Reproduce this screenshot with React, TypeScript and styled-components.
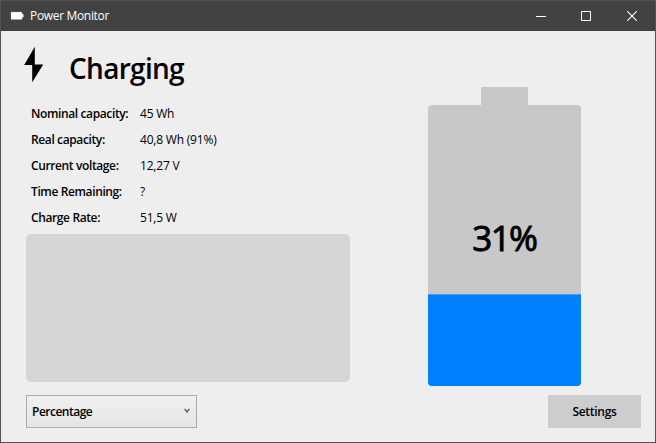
import React from "react";
import styled, { createGlobalStyle } from "styled-components";

const GlobalStyle = createGlobalStyle`
  * { box-sizing: border-box; }
  body { margin: 0; font-family: "Segoe UI", "Open Sans", "Noto Sans", sans-serif; font-size: 12px; color: #000; overflow: hidden; }
`;

const Window = styled.div`
  width: 656px;
  height: 443px;
  display: flex;
  flex-direction: column;
  background: #eeeeee;
  border: 1px solid #535353;
`;

const TitleBar = styled.header`
  height: 30px;
  flex: none;
  display: flex;
  align-items: center;
  background: #424242;
  color: #fff;
  padding-left: 9px;
`;

const AppTitle = styled.span`
  flex: 1;
  margin-left: 6px;
  line-height: 28px;
  letter-spacing: -0.33px;
`;

const CaptionButton = styled.button`
  width: 46px;
  height: 28px;
  padding: 0;
  border: 0;
  background: none;
  display: grid;
  place-items: center;
`;

const Body = styled.main`
  flex: 1;
  display: flex;
  justify-content: space-between;
  padding: 0 14px 14px 25px;
`;

const Details = styled.section`
  width: 324px;
  display: flex;
  flex-direction: column;
`;

const Status = styled.div`
  height: 70px;
  display: flex;
  align-items: flex-start;
`;

const StatusText = styled.h1`
  margin: 18px 0 0 25px;
  font-size: 28px;
  line-height: 38px;
  font-weight: 600;
  letter-spacing: -0.7px;
`;

const Stats = styled.dl`
  margin: 0 0 0 5px;
  display: grid;
  grid-template-columns: 109px 1fr;
  grid-auto-rows: 26px;
  line-height: 26px;
  white-space: nowrap;
`;

const Label = styled.dt`
  font-weight: 600;
  letter-spacing: -0.38px;
`;

const Value = styled.dd`
  margin: 0;
  letter-spacing: -0.2px;
`;

const Graph = styled.div`
  margin-top: 3px;
  height: 148px;
  border-radius: 5px;
  background: #d5d5d5;
`;

const Select = styled.button`
  margin-top: 13px;
  width: 171px;
  height: 33px;
  display: flex;
  align-items: center;
  justify-content: space-between;
  padding: 0 6px 0 5px;
  border: 1px solid #acacac;
  background: linear-gradient(#f0f0f0, #e5e5e5);
  font: 600 12px "Segoe UI", "Open Sans", "Noto Sans", sans-serif;
  letter-spacing: -0.5px;
  color: #000;
`;

const Chevron = styled.svg`
  margin-bottom: 2px;
`;

const Gauge = styled.section`
  width: 213.4px;
  display: flex;
  flex-direction: column;
  padding-top: 56.4px;
`;

const Battery = styled.div`
  width: 153.5px;
  height: 298.2px;
  display: flex;
  flex-direction: column;
  align-items: center;
`;

const Terminal = styled.div`
  width: 47px;
  height: 18px;
  flex: none;
  margin-left: 1px;
  border-radius: 1px 1px 0 0;
  background: #c8c8c8;
`;

const Cell = styled.div`
  width: 100%;
  flex: 1;
  display: flex;
  flex-direction: column;
  border-radius: 4px;
  overflow: hidden;
  background: #c8c8c8;
`;

const Percent = styled.div`
  flex: 1;
  padding-top: 107px;
  font-size: 35px;
  line-height: 52px;
  font-weight: 400;
  -webkit-text-stroke: 0.9px #000;
  text-align: center;
  letter-spacing: -1.6px;
`;

const Charge = styled.div`
  height: 91.5px;
  background: #0080ff;
  border-top: 1px solid #409be8;
`;

const SettingsButton = styled.button`
  align-self: flex-end;
  margin-top: 9.4px;
  width: 93px;
  height: 33px;
  border: 0;
  background: #cdcdcd;
  font: 600 12px "Segoe UI", "Open Sans", "Noto Sans", sans-serif;
  letter-spacing: -0.3px;
  color: #000;
`;

const stats = [
  { label: "Nominal capacity:", value: "45 Wh" },
  { label: "Real capacity:", value: "40,8 Wh (91%)" },
  { label: "Current voltage:", value: "12,27 V" },
  { label: "Time Remaining:", value: "?" },
  { label: "Charge Rate:", value: "51,5 W" },
];

export default function App() {
  return (
    <Window>
      <GlobalStyle />
      <TitleBar>
        <svg width="14" height="10" viewBox="0 0 14 10">
          <path d="M1 1h11v2h1.4v3.5H12v2H1z" fill="#fff" stroke="#aaa" strokeWidth=".3" />
        </svg>
        <AppTitle>Power Monitor</AppTitle>
        <CaptionButton aria-label="Minimize">
          <svg width="10" height="10" overflow="visible"><path d="M1 5.5h10" stroke="#fff" /></svg>
        </CaptionButton>
        <CaptionButton aria-label="Maximize">
          <svg width="10" height="10"><path d="M.5.5h9v9h-9z" fill="none" stroke="#fff" /></svg>
        </CaptionButton>
        <CaptionButton aria-label="Close">
          <svg width="10" height="10"><path d="M.2.2l9.6 9.6M9.8.2L.2 9.8" stroke="#fff" strokeWidth="1.1" /></svg>
        </CaptionButton>
      </TitleBar>
      <Body>
        <Details>
          <Status>
            <svg width="18" height="54" viewBox="26 31 18 54" overflow="visible">
              <path d="M34.8 46.7V64.5H43.2L32.2 82.2V65H24.2z" fill="#000" />
            </svg>
            <StatusText>Charging</StatusText>
          </Status>
          <Stats>
            {stats.map((s) => (
              <React.Fragment key={s.label}>
                <Label>{s.label}</Label>
                <Value>{s.value}</Value>
              </React.Fragment>
            ))}
          </Stats>
          <Graph />
          <Select>
            Percentage
            <Chevron width="6" height="6" viewBox="0 0 6 6"><path d="M.7.8L3 4L5.3.8" fill="none" stroke="#606060" strokeWidth="1.4" /></Chevron>
          </Select>
        </Details>
        <Gauge>
          <Battery>
            <Terminal />
            <Cell>
              <Percent>31%</Percent>
              <Charge />
            </Cell>
          </Battery>
          <SettingsButton>Settings</SettingsButton>
        </Gauge>
      </Body>
    </Window>
  );
}
